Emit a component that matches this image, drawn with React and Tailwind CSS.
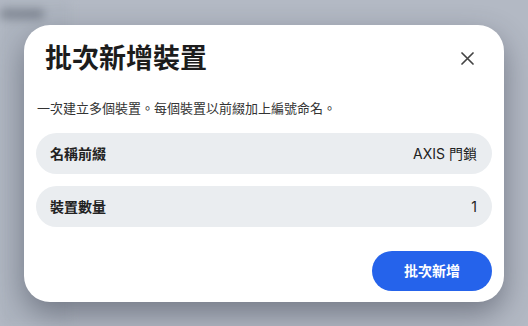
import { useState } from 'react';

const fontStack = { fontFamily: 'Inter, "Noto Sans CJK TC", sans-serif' };

function FieldRow({ label, value }) {
  return (
    <div className="flex h-[41px] items-center justify-between rounded-full bg-[#eaedf0] pl-[14px] pr-[15px]">
      <span className="text-[14px] font-bold text-[#222]">{label}</span>
      <span className="text-[14px] text-[#222]">{value}</span>
    </div>
  );
}

export default function App() {
  const [open, setOpen] = useState(true);
  const [prefix] = useState('AXIS 門鎖');
  const [count] = useState(1);

  return (
    <div className="relative h-[326px] w-full overflow-hidden bg-[#b3b9c4]" style={fontStack}>
      {/* blurred page behind the dialog */}
      <div className="absolute inset-0 blur-[5px]">
        <div className="h-full w-[70px] bg-[#aeb5c0]" />
        <div className="absolute left-0 top-[9px] h-[10px] w-[44px] rounded bg-[#7f8692]" />
      </div>

      {open && (
        <div className="relative flex h-full items-center justify-center">
          <div className="w-[480px] rounded-[26px] bg-white px-3 pb-[11px] pt-4 shadow-[0_12px_30px_rgba(40,45,60,0.45)]">
            <div className="flex h-9 items-center justify-between pl-[9px] pr-[9px]">
              <h2 className="text-[27px] font-bold leading-none text-[#1c1c1c]">批次新增裝置</h2>
              <button
                type="button"
                onClick={() => setOpen(false)}
                className="flex h-8 w-8 items-center justify-center text-[#444]"
              >
                <svg width="13" height="13" viewBox="0 0 13 13" fill="none" stroke="currentColor" strokeWidth="1.7" strokeLinecap="round">
                  <path d="M1 1l11 11M12 1L1 12" />
                </svg>
              </button>
            </div>

            <p className="mt-[21px] pl-px text-[13px] leading-5 text-[#333]">
              一次建立多個裝置。每個裝置以前綴加上編號命名。
            </p>

            <div className="mt-[15px] flex flex-col gap-3">
              <FieldRow label="名稱前綴" value={prefix} />
              <FieldRow label="裝置數量" value={count} />
            </div>

            <div className="mt-6 flex justify-end">
              <button type="button" className="h-10 w-[120px] rounded-full bg-[#2563eb] text-[14px] font-bold text-white">
                批次新增
              </button>
            </div>
          </div>
        </div>
      )}
    </div>
  );
}
